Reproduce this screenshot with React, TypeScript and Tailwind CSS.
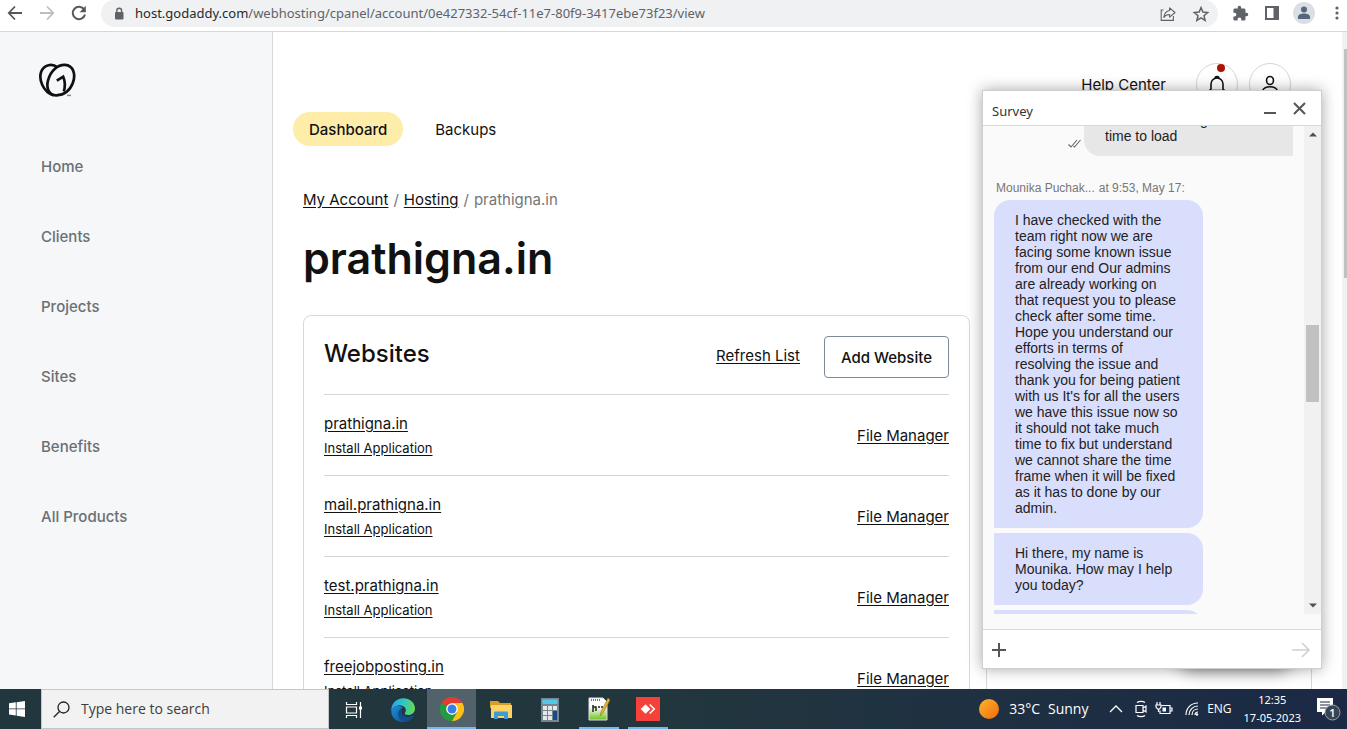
import type { ReactNode } from "react";

const navItems = ["Home", "Clients", "Projects", "Sites", "Benefits", "All Products"];
const websites = ["prathigna.in", "mail.prathigna.in", "test.prathigna.in", "freejobposting.in"];

const longMessage =
  "I have checked with the team right now we are facing some known issue from our end Our admins are already working on that request you to please check after some time. Hope you understand our efforts in terms of resolving the issue and thank you for being patient with us It's for all the users we have this issue now so it should not take much time to fix but understand we cannot share the time frame when it will be fixed as it has to done by our admin.";

function BrowserBar() {
  return (
    <header className="flex h-8 shrink-0 items-start border-b border-[#d5d8db] bg-white font-['Noto_Sans',sans-serif] text-[#5f6368]">
      <div className="flex h-[26px] w-[101px] shrink-0 items-center gap-4 pl-[7px]">
        <button aria-label="Back">
          <svg width="16" height="16" viewBox="0 0 16 16" fill="none" stroke="#55585c" strokeWidth="1.8"><path d="M15 8H2M8 1.5 1.8 8 8 14.5" /></svg>
        </button>
        <button aria-label="Forward">
          <svg width="16" height="16" viewBox="0 0 16 16" fill="none" stroke="#bcbec1" strokeWidth="1.8"><path d="M1 8h13M8 1.5 14.2 8 8 14.5" /></svg>
        </button>
        <button aria-label="Reload">
          <svg width="16" height="16" viewBox="0 0 16 16"><path d="M13.2 4.6A6.2 6.2 0 1 0 14 9.5" fill="none" stroke="#55585c" strokeWidth="2" /><path d="M14.8.8v6.4H8.6z" fill="#55585c" /></svg>
        </button>
      </div>
      <div className="flex h-[27px] min-w-0 flex-1 items-center rounded-full bg-[#eff1f3] pr-2 pl-3">
        <svg className="mr-[10px] shrink-0" width="12" height="14" viewBox="0 0 12 14"><rect x="2" y="5" width="8.5" height="7.6" rx="1" fill="#5f6368" /><path d="M3.8 6V3.6a2.4 2.4 0 0 1 4.8 0V6" fill="none" stroke="#5f6368" strokeWidth="1.4" /></svg>
        <span className="min-w-0 flex-1 truncate text-[13px] leading-[27px]">
          <span className="text-[#27292c]">host.godaddy.com</span>/webhosting/cpanel/account/0e427332-54cf-11e7-80f9-3417ebe73f23/view
        </span>
        <button aria-label="Share" className="mr-4">
          <svg width="16" height="16" viewBox="0 0 16 16" fill="none" stroke="#5f6368" strokeWidth="1.1"><path d="M3.500 4H1.200v10.400h12.200V10" /><path d="M9.600 1.800 15 6.500l-5.400 4.600V8.500C7 8.400 5 9.500 3.800 11.400 4.300 7.500 6.200 5 9.600 4.500z" strokeLinejoin="round" /></svg>
        </button>
        <button aria-label="Bookmark">
          <svg width="18" height="18" viewBox="0 0 24 24" fill="none" stroke="#5f6368" strokeWidth="2"><path d="m12 3.500 2.500 5.900 6.400.6-4.900 4.200 1.500 6.300-5.500-3.400-5.500 3.400L8 14.200 3.100 10l6.400-.6z" /></svg>
        </button>
      </div>
      <div className="flex h-[26px] w-[129px] shrink-0 items-center pl-[14px]">
        <button aria-label="Extensions">
          <svg width="17" height="17" viewBox="0 0 24 24" fill="#5f6368"><path d="M20.500 11H19V7a2 2 0 0 0-2-2h-4V3.500a2.500 2.500 0 0 0-5 0V5H4a2 2 0 0 0-2 2v3.800h1.500a2.700 2.700 0 0 1 0 5.400H2V20a2 2 0 0 0 2 2h3.800v-1.500a2.700 2.700 0 0 1 5.400 0V22H17a2 2 0 0 0 2-2v-4h1.500a2.500 2.500 0 0 0 0-5z" /></svg>
        </button>
        <button aria-label="Side panel" className="ml-4">
          <svg width="14" height="14" viewBox="0 0 14 14"><path fill="#5f6368" fillRule="evenodd" d="M0 0h14v14H0zM2 2v10h6.500V2z" /></svg>
        </button>
        <button aria-label="Profile" className="ml-[14px] rounded-full bg-[#dadfe6]">
          <svg width="22" height="22" viewBox="0 0 22 22" fill="#56677c"><circle cx="11" cy="7.500" r="3" /><path d="M5 17v-2.200c0-2.200 3-3.400 6-3.400s6 1.200 6 3.400V17z" /></svg>
        </button>
        <button aria-label="Browser menu" className="ml-5">
          <svg width="4" height="14" viewBox="0 0 4 14" fill="#5f6368"><circle cx="2" cy="2" r="1.600" /><circle cx="2" cy="7" r="1.600" /><circle cx="2" cy="12" r="1.600" /></svg>
        </button>
      </div>
    </header>
  );
}

function Sidebar() {
  return (
    <aside className="flex w-[273px] shrink-0 flex-col border-r border-[#d6dade] bg-[#f5f7f8] pt-[31px]">
      <a href="#" aria-label="GoDaddy" className="ml-[38px] w-fit">
        <svg width="38" height="35" viewBox="0 0 38 35" fill="none" stroke="#111" strokeWidth="2.700">
          <path d="M19.500 4.300C16 1.600 11.500 1.200 8 3.200 2.200 6.500.7 14.200 4.200 21.700c2.500 5.500 7 9.300 11.500 10.700" />
          <path d="M18.500 32.300c-7.600.3-10.600-7-8.400-15.100C12.500 8 19.500 1.600 27 1.900c8.500.5 11 9.800 7.800 18.100-2.800 7.400-9 12-16.300 12.300z" />
          <path d="M18.800 17.600 25.200 13.700c1.900 4.500 2.300 9.300.6 14.800" strokeLinejoin="miter" />
          <path d="M29 32.400h4" strokeWidth="1.500" stroke="#888" />
        </svg>
      </a>
      <nav className="mt-[57px] flex flex-col gap-[46px] pl-[41px] text-[15px] leading-6 font-medium text-[#6b7075]">
        {navItems.map((item) => (
          <a key={item} href="#" className="w-fit">{item}</a>
        ))}
      </nav>
    </aside>
  );
}

function TopActions() {
  return (
    <div className="flex items-center justify-end pr-[51px]">
      <a href="#" className="mr-[30px] pt-[2px] text-[15px] leading-6">Help Center</a>
      <button aria-label="Notifications" className="relative mr-[11px] flex size-[42px] items-center justify-center rounded-full border border-[#d6d6d6] bg-white">
        <svg width="18" height="20" viewBox="0 0 18 20" fill="none" stroke="#111" strokeWidth="1.600"><path d="M7 4.500a2 2 0 0 1 4 0M3 15v-5a6 6 0 0 1 12 0v5l1.500 1.500h-15z" /></svg>
        <span className="absolute top-0 right-3 size-2 rounded-full bg-[#ae1302]" />
      </button>
      <button aria-label="Account" className="flex size-[42px] items-center justify-center rounded-full border border-[#d6d6d6] bg-white">
        <svg width="18" height="20" viewBox="0 0 18 20" fill="none" stroke="#111" strokeWidth="1.600"><rect x="5.600" y="2.500" width="6.800" height="8" rx="3.400" /><path d="M1.500 17c1-3.500 4-4.300 7.500-4.300s6.500.8 7.500 4.300" /></svg>
      </button>
    </div>
  );
}

function WebsitesCard() {
  return (
    <section className="rounded-lg border border-[#d6d9dc] px-5 pt-5">
      <div className="flex h-[59px] items-start border-b border-[#d6d6d6]">
        <h2 className="flex-1 text-2xl leading-9 font-medium">Websites</h2>
        <a href="#" className="mt-2 mr-6 text-[15px] leading-6 underline underline-offset-2">Refresh List</a>
        <button className="h-[42px] rounded border border-[#7c8a99] px-4 pt-[2px] text-[15px] font-medium">Add Website</button>
      </div>
      <ul>
        {websites.map((site) => (
          <li key={site} className="flex h-[81px] items-center justify-between border-b border-[#d6d6d6] pt-[2px]">
            <div className="flex flex-col items-start">
              <a href="#" className="text-[15px] leading-6 underline underline-offset-2">{site}</a>
              <a href="#" className="text-[13px] leading-6 underline underline-offset-2">Install Application</a>
            </div>
            <a href="#" className="text-[15px] leading-6 underline underline-offset-2">File Manager</a>
          </li>
        ))}
      </ul>
    </section>
  );
}

function AgentBubble({ children }: { children: ReactNode }) {
  return (
    <div className="ml-[11px] w-[209px] shrink-0 rounded-r-2xl bg-[#d9defd] py-3 pr-[22px] pl-[21px] first-of-type:rounded-tl-2xl">{children}</div>
  );
}

function Chat() {
  return (
    <>
      <div className="absolute right-14 bottom-6 h-8 w-28 rounded-full shadow-[0_2px_16px_4px_rgba(0,0,0,0.45)]" />
      <section aria-label="Survey chat" className="absolute right-[25px] bottom-5 flex h-[579px] w-[340px] flex-col border border-[#cfcfcf] bg-white font-['Liberation_Sans',Arial,sans-serif] shadow-[0_0_14px_rgba(0,0,0,0.35)]">
        <header className="flex h-[35px] shrink-0 items-center border-b border-[#d8d8d8] pr-[15px] pl-[9px]">
          <h2 className="flex-1 pt-2 font-['Noto_Sans',sans-serif] text-[13px] text-[#333]">Survey</h2>
          <button aria-label="Minimize" className="mr-[17px]"><svg width="12" height="14" viewBox="0 0 12 14"><path d="M0 12h12" stroke="#555" strokeWidth="2" /></svg></button>
          <button aria-label="Close"><svg width="13" height="13" viewBox="0 0 13 13"><path d="M1 1l11 11M12 1 1 12" stroke="#555" strokeWidth="2" /></svg></button>
        </header>
        <div className="flex min-h-0 flex-1 bg-[#fafafa] pb-[15px]">
          <div className="flex min-w-0 flex-1 flex-col overflow-hidden text-sm leading-4 text-[#222]">
            <div className="-mt-[26px] mr-[11px] flex shrink-0 items-end justify-end gap-[3px]">
              <svg className="mb-2" width="13" height="9" viewBox="0 0 13 9" fill="none" stroke="#666" strokeWidth="1.100"><path d="m.5 5.500 2.500 2.500L9 1M5.500 7l1 1 6-7" /></svg>
              <p className="w-[209px] rounded-tl-2xl rounded-bl-2xl bg-[#e7e7e7] py-3 pr-[22px] pl-[21px]">website is taking<br />time to load</p>
            </div>
            <p className="mt-6 mb-1 flex shrink-0 gap-1 pl-[13px] text-xs leading-4 text-[#777]"><span>Mounika Puchak...</span><span>at 9:53, May 17:</span></p>
            <div className="flex flex-col gap-[5px]">
              <AgentBubble>{longMessage}</AgentBubble>
              <AgentBubble>Hi there, my name is Mounika. How may I help you today?</AgentBubble>
              <AgentBubble>&nbsp;</AgentBubble>
            </div>
          </div>
          <div className="flex w-[17px] shrink-0 flex-col items-center bg-[#f1f1f1]" aria-hidden="true">
            <svg className="mt-[6px]" width="8" height="5" viewBox="0 0 8 5" fill="#505050"><path d="M0 4.500 4 .5l4 4z" /></svg>
            <div className="flex-[188]" />
            <div className="h-[77px] w-[13px] bg-[#c1c1c1]" />
            <div className="flex-[200]" />
            <svg className="mb-[6px]" width="8" height="5" viewBox="0 0 8 5" fill="#505050"><path d="M0 .5 4 4.500l4-4z" /></svg>
          </div>
        </div>
        <div className="flex h-[39px] shrink-0 items-center border-t border-[#d8d8d8] pt-[2px] pr-[10px] pl-[9px]">
          <button aria-label="Attach"><svg width="14" height="14" viewBox="0 0 14 14"><path d="M7 0v14M0 7h14" stroke="#555" strokeWidth="2" /></svg></button>
          <input aria-label="Message" className="min-w-0 flex-1 bg-transparent px-2 text-sm outline-none" />
          <button aria-label="Send"><svg width="20" height="16" viewBox="0 0 20 16" fill="none" stroke="#d0d0d0" strokeWidth="1.600"><path d="M1 8h17M11 1l7 7-7 7" /></svg></button>
        </div>
      </section>
    </>
  );
}

function TaskButton({ label, state, children }: { label: string; state?: "open" | "active"; children: ReactNode }) {
  const tone = state === "active" ? "bg-[#52626a]" : "";
  return (
    <button aria-label={label} className={`flex h-10 w-[49px] flex-col items-center justify-between ${tone}`}>
      <span className="flex flex-1 items-center pt-[2px]">{children}</span>
      {state && <span className={state === "active" ? "h-[2px] w-full bg-[#76b9ed]" : "h-[2px] w-10 bg-[#76b9ed]"} />}
    </button>
  );
}

function Taskbar() {
  return (
    <footer className="flex h-10 shrink-0 items-center bg-linear-to-r from-[#22363e] from-50% to-[#1b2945] font-['Open_Sans',sans-serif] text-white">
      <button aria-label="Start" className="flex w-[41px] shrink-0 items-center pl-[9px]">
        <svg width="16" height="16" viewBox="0 0 16 16" fill="#fff"><path d="M0 2.300 6.800 1.300v6.200H0zM7.600 1.200 16 0v7.500H7.600zM0 8.300h6.800v6.200L0 13.600zM7.600 8.300H16V16l-8.400-1.200z" /></svg>
      </button>
      <label className="flex h-10 w-72 shrink-0 items-center border border-[#c4c7c9] bg-[#f2f2f2] pl-[11px]">
        <svg width="17" height="17" viewBox="0 0 17 17" fill="none" stroke="#222" strokeWidth="1.300"><circle cx="10.500" cy="6.500" r="5.500" /><path d="M6.500 10.500.7 16.300" /></svg>
        <input aria-label="Search" placeholder="Type here to search" className="ml-[11px] min-w-0 flex-1 bg-transparent text-sm outline-none placeholder:text-[#3d3d3d]" />
      </label>
      <div className="flex flex-1">
        <TaskButton label="Task view">
          <svg width="18" height="16" viewBox="0 0 18 16" fill="none" stroke="#fff" strokeWidth="1.200"><path d="M1.500 0v2.500h10V0M1.500 16v-2.500h10V16M1.500 5h10v6h-10zM15.500 0v16" /><path d="M14 4.500h3v3h-3z" fill="#fff" stroke="none" /></svg>
        </TaskButton>
        <TaskButton label="Microsoft Edge">
          <svg width="24" height="24" viewBox="0 0 24 24">
            <defs>
              <linearGradient id="edgeTop" x1="0" y1=".4" x2="1" y2=".5"><stop stopColor="#2aa5e8" /><stop offset=".5" stopColor="#31c6c3" /><stop offset="1" stopColor="#68d84f" /></linearGradient>
              <linearGradient id="edgeLow" x1="0" y1="0" x2="1" y2="1"><stop stopColor="#1b8fd8" /><stop offset="1" stopColor="#114a8b" /></linearGradient>
            </defs>
            <path d="M.3 13C0 5 5.500.2 12.200.2 19 .2 24 5 24 10.500c0 4-3 6.500-6.800 6.500-2.500 0-4-1-3.200-2.300 3.200-4.200-2.500-8.400-7-7.200C3.500 8.300 1 10 .3 13z" fill="url(#edgeTop)" />
            <path d="M.3 13C0 19.500 5.500 24 12.200 24c4.300 0 8-2 10.200-5.500.4-.6-.2-1-.8-.6-4.600 2.600-12 .5-11.500-5 .1-1.700 1-2.800 1.800-3.400C7 5.800 1.300 8.200.3 13z" fill="url(#edgeLow)" />
            <path d="M9 11.200C4.500 15 7.500 23.800 15.500 23.500c3-.7 5.300-2.500 6.900-5 .4-.6-.2-1-.8-.6-4.600 2.600-12 .5-11.500-5 .1-1.200.5-2 1.200-2.800-.8 0-1.600.3-2.300 1.100z" fill="#124c91" />
          </svg>
        </TaskButton>
        <TaskButton label="Google Chrome" state="active">
          <svg width="24" height="24" viewBox="0 0 24 24">
            <path d="M12 12 1.600 6A12 12 0 0 1 22.400 6z" fill="#e33b2e" />
            <path d="M12 12 22.400 6A12 12 0 0 1 12 24z" fill="#fbc116" />
            <path d="M12 12v12A12 12 0 0 1 1.600 6z" fill="#249a41" />
            <path d="M12 6h10.400L17.200 15 12 24l5.200-9z" fill="#fbc116" />
            <path d="M1.600 6 6.800 15l5.200 3 5.200-3L12 24A12 12 0 0 1 1.600 6z" fill="#249a41" />
            <circle cx="12" cy="12" r="5.800" fill="#fff" /><circle cx="12" cy="12" r="4.500" fill="#3a7de8" />
          </svg>
        </TaskButton>
        <TaskButton label="File Explorer">
          <svg width="22" height="20" viewBox="0 0 22 20"><path d="M0 1h8l2 2h11v5H0z" fill="#d99d25" /><path d="M1 5h21v13H1z" fill="#fbd366" /><path d="M4 19v-6.500a1 1 0 0 1 1-1h12a1 1 0 0 1 1 1V19h-4v-3H8v3z" fill="#3f9bd5" /></svg>
        </TaskButton>
        <TaskButton label="Calculator">
          <svg width="18" height="24" viewBox="0 0 18 24"><path d="M0 0h18v24H0z" fill="#77858f" /><path d="M1.500 1.500h15V6h-15z" fill="#50c8ea" /><g fill="#e4e8eb"><path d="M2 8h4v4H2zM7 8h4v4H7zM12 8h4v4h-4zM2 13h4v4H2zM7 13h4v4H7zM2 18h4v4H2zM7 18h4v4H7z" /></g><path d="M12 13h4v9h-4z" fill="#17498c" /></svg>
        </TaskButton>
        <TaskButton label="Notepad++" state="open">
          <svg width="22" height="24" viewBox="0 0 22 24"><defs><linearGradient id="note" x1="0" y1="0" x2="0" y2="1"><stop offset=".4" stopColor="#fff" /><stop offset="1" stopColor="#6cc01d" /></linearGradient></defs><path d="M1 1h14l4 4v18H1z" fill="url(#note)" stroke="#ddd" /><path d="M3 3h10" stroke="#777" strokeDasharray="1 1" strokeWidth="2" /><path d="M5 8v7M5 10h3v4M10 10h2M13 10h2" stroke="#222" strokeWidth="1.500" fill="none" /><path d="M20 1 13 15l-1 4 3-3L22 3z" fill="#e4b62d" stroke="#8f7434" strokeWidth=".6" /></svg>
        </TaskButton>
        <TaskButton label="AnyDesk" state="open">
          <svg width="24" height="24" viewBox="0 0 24 24"><path d="M0 0h24v24H0z" fill="#f4423a" /><path d="m9.500 7.200 4.900 4.800-4.900 4.800L4.700 12z" fill="#fff" /><path d="m13.200 8 1-1L19.400 12l-5.200 5-1-1 4-4z" fill="#fff" /></svg>
        </TaskButton>
      </div>
      <div className="flex shrink-0 items-center pr-[6px] text-sm">
        <svg width="20" height="20" viewBox="0 0 20 20"><defs><linearGradient id="sun" x1="0" y1="0" x2="1" y2="1"><stop stopColor="#fbb62c" /><stop offset="1" stopColor="#f36a0c" /></linearGradient></defs><circle cx="10" cy="10" r="10" fill="url(#sun)" /></svg>
        <span className="ml-[10px] flex w-[100px] gap-2"><span>33°C</span><span>Sunny</span></span>
        <svg width="14" height="8" viewBox="0 0 14 8" fill="none" stroke="#fff" strokeWidth="1.300"><path d="m1 7 6-6 6 6" /></svg>
        <svg className="ml-3" width="12" height="18" viewBox="0 0 12 18" fill="none" stroke="#fff" strokeWidth="1.200"><path d="M1 5.500h7v7H1zM8 8l3-2v6l-3-2M2 2.500c2-1.500 6-1.500 8 0M2 15.500c2 1.500 6 1.500 8 0" /></svg>
        <svg className="ml-2" width="18" height="16" viewBox="0 0 18 16" fill="none" stroke="#fff" strokeWidth="1.200"><path d="M6.500 4.500H15v8H5V9.500M15.500 7H17v3h-1.500" /><path d="M7.500 6.500H11v4H7.500z" fill="#fff" stroke="none" /><path d="M2 1v3M5 1v3M1 4h5v2L4.500 8h-2L1 6zM3.500 8v3" /></svg>
        <svg className="ml-3" width="14" height="14" viewBox="0 0 14 14" fill="none" stroke="#fff" strokeWidth="1.200"><path d="M1 13C1 6 6 1 13 1M4 13c0-5 4-9 9-9M7 13c0-3.500 2.500-6 6-6M10 13c0-2 1-3 3-3" /><circle cx="12" cy="12.500" r="1.200" fill="#fff" stroke="none" /></svg>
        <span className="ml-2 text-xs">ENG</span>
        <span className="ml-3 flex flex-col items-center font-['Noto_Sans',sans-serif] text-[11px] leading-[18px]"><span>12:35</span><span>17-05-2023</span></span>
        <button aria-label="Notifications, 1 new" className="ml-4">
          <svg width="24" height="26" viewBox="0 0 24 26"><path d="M0 2h16v14H9l-4 3.500V16H0z" fill="#fff" /><path d="M3 6h10M3 9h10M3 12h7" stroke="#1b2945" strokeWidth="1.200" /><circle cx="15.500" cy="16.500" r="7.500" fill="#3a4350" stroke="#9aa2ab" /><text x="15.500" y="20.500" textAnchor="middle" fontSize="11" fontWeight="600" fill="#fff">1</text></svg>
        </button>
      </div>
    </footer>
  );
}

export default function App() {
  return (
    <div className="flex h-screen flex-col overflow-hidden bg-white font-['Inter',sans-serif] text-[#111]">
      <BrowserBar />
      <div className="relative flex min-h-0 flex-1 overflow-hidden">
        <Sidebar />
        <main className="min-w-0 flex-1 pt-[31px]">
          <TopActions />
          <div className="mt-[7px] flex pl-5 text-[15px] leading-8 font-medium">
            <a href="#" className="rounded-full bg-[#feeda8] px-4 pt-[2px]">Dashboard</a>
            <a href="#" className="px-8 pt-[2px] font-normal">Backups</a>
          </div>
          <div className="px-[30px]">
            <nav aria-label="Breadcrumb" className="mt-[42px] flex gap-[5px] text-[15px] leading-6 text-[#767676]">
              <a href="#" className="text-[#111] underline underline-offset-2">My Account</a>
              <span>/</span>
              <a href="#" className="text-[#111] underline underline-offset-2">Hosting</a>
              <span>/</span>
              <span>prathigna.in</span>
            </nav>
            <h1 className="mt-4 text-[43px] leading-[60px] font-semibold">prathigna.in</h1>
            <div className="mt-[27px] grid grid-cols-[minmax(0,1fr)_326px] gap-4">
              <WebsitesCard />
              <section aria-label="Account details" className="rounded-lg border border-[#d6d9dc]" />
            </div>
          </div>
        </main>
        <div className="w-[5px] shrink-0 bg-[#f1f1f1] pt-[17px] pl-[2px]" aria-hidden="true">
          <div className="h-[229px] bg-[#c1c1c1]" />
        </div>
        <Chat />
      </div>
      <Taskbar />
    </div>
  );
}
